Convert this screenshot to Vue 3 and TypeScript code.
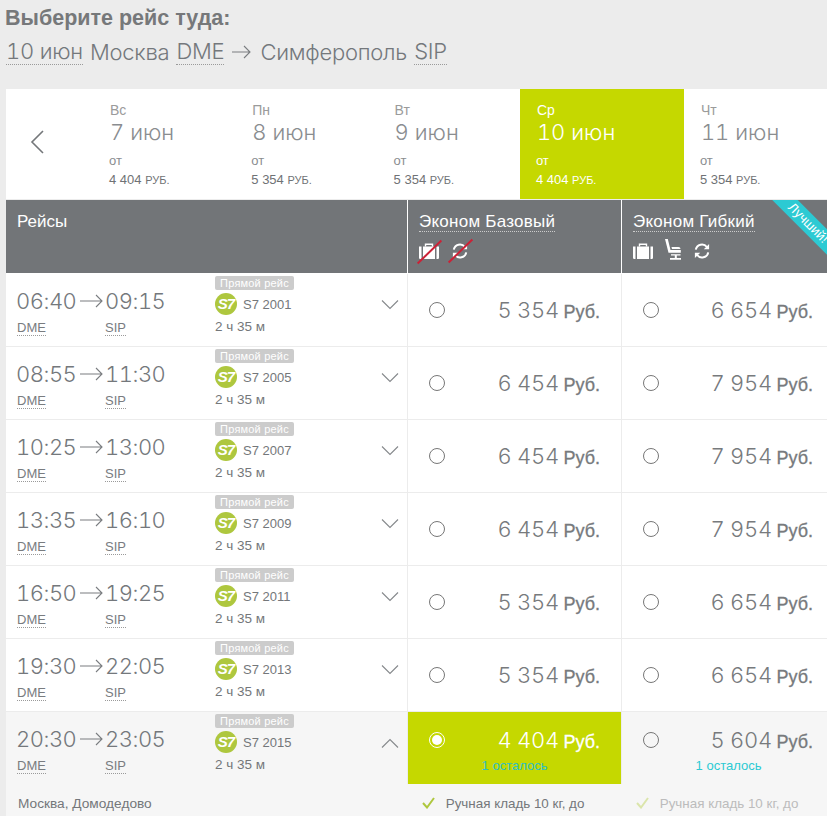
<script setup lang="ts">
interface Day { wd: string; date: string; price: string; active?: boolean }
interface Flight { dep: string; arr: string; no: string; a: string; b: string; open?: boolean }
const days: Day[] = [
  { wd: 'Вс', date: '7 июн', price: '4 404' },
  { wd: 'Пн', date: '8 июн', price: '5 354' },
  { wd: 'Вт', date: '9 июн', price: '5 354' },
  { wd: 'Ср', date: '10 июн', price: '4 404', active: true },
  { wd: 'Чт', date: '11 июн', price: '5 354' },
]
const flights: Flight[] = [
  { dep: '06:40', arr: '09:15', no: 'S7 2001', a: '5 354', b: '6 654' },
  { dep: '08:55', arr: '11:30', no: 'S7 2005', a: '6 454', b: '7 954' },
  { dep: '10:25', arr: '13:00', no: 'S7 2007', a: '6 454', b: '7 954' },
  { dep: '13:35', arr: '16:10', no: 'S7 2009', a: '6 454', b: '7 954' },
  { dep: '16:50', arr: '19:25', no: 'S7 2011', a: '5 354', b: '6 654' },
  { dep: '19:30', arr: '22:05', no: 'S7 2013', a: '5 354', b: '6 654' },
  { dep: '20:30', arr: '23:05', no: 'S7 2015', a: '4 404', b: '5 604', open: true },
]
</script>

<template>
  <div class="page">
    <h1 class="title">Выберите рейс туда:</h1>
    <div class="route">
      <span class="dot">10 июн</span> Москва <span class="dot">DME</span>
      <svg class="route-arrow" width="20" height="14" viewBox="0 0 20 14"><path d="M0 7H18M12 1l6 6-6 6" fill="none" stroke="#7a7d80" stroke-width="1.1"/></svg>
      Симферополь <span class="dot">SIP</span>
    </div>

    <div class="board">
      <div class="days">
        <div class="prev">
          <svg width="16" height="24" viewBox="0 0 16 24"><path d="M14 1L3 12l11 11" fill="none" stroke="#74777a" stroke-width="1.6"/></svg>
        </div>
        <div v-for="d in days" :key="d.date" class="day" :class="{ active: d.active }">
          <div class="wd">{{ d.wd }}</div>
          <div class="date">{{ d.date }}</div>
          <div class="from">от</div>
          <div class="dprice">{{ d.price }} <span>РУБ.</span></div>
        </div>
      </div>

      <div class="head">
        <div class="hcol hflights">Рейсы</div>
        <div class="hcol hfare">
          <span class="fname">Эконом Базовый</span>
          <div class="hicons">
            <span class="struck">
              <svg width="20" height="16" viewBox="0 0 20 16"><path d="M0 3.500h2.500V16H1.200A1.200 1.200 0 0 1 0 14.800zM4 3.500h12V16H4zM17.500 3.500H20v11.300a1.200 1.200 0 0 1-1.200 1.200h-1.300z" fill="#fff"/><path d="M6.500 3.500V1.200h7v2.300" fill="none" stroke="#fff" stroke-width="1.400"/></svg>
              <i class="slash"></i>
            </span>
            <span class="struck refresh">
              <svg width="16" height="16" viewBox="0 0 18 18"><path d="M2 7.500A7 7 0 0 1 14.500 4.500M16 10.500A7 7 0 0 1 3.500 13.500" fill="none" stroke="#fff" stroke-width="2.200"/><path d="M17 1v6h-6zM1 17v-6h6z" fill="#fff"/></svg>
              <i class="slash"></i>
            </span>
          </div>
        </div>
        <div class="hcol hfare last">
          <span class="fname">Эконом Гибкий</span>
          <div class="hicons">
            <span class="struck">
              <svg width="20" height="16" viewBox="0 0 20 16"><path d="M0 3.500h2.500V16H1.200A1.200 1.200 0 0 1 0 14.800zM4 3.500h12V16H4zM17.500 3.500H20v11.300a1.200 1.200 0 0 1-1.200 1.200h-1.300z" fill="#fff"/><path d="M6.500 3.500V1.200h7v2.300" fill="none" stroke="#fff" stroke-width="1.400"/></svg>
            </span>
            <span class="struck seat">
              <svg width="16" height="21" viewBox="0 0 16 21"><path d="M0 0h2.800l2.700 11h10.300v2.800H3.500z" fill="#fff"/><path d="M6.500 8h7a2 2 0 0 1 2 2H7zM6 15.200h9.500v1.400H6zM9.800 16.500h2V19h-2zM5 19h11v1.800H5z" fill="#fff"/></svg>
            </span>
            <span class="struck refresh">
              <svg width="16" height="16" viewBox="0 0 18 18"><path d="M2 7.500A7 7 0 0 1 14.500 4.500M16 10.500A7 7 0 0 1 3.500 13.500" fill="none" stroke="#fff" stroke-width="2.200"/><path d="M17 1v6h-6zM1 17v-6h6z" fill="#fff"/></svg>
            </span>
          </div>
          <div class="ribbon">Лучший!</div>
        </div>
      </div>

      <div v-for="f in flights" :key="f.no" class="row" :class="{ open: f.open }">
        <div class="info">
          <div class="times">
            <div class="leg"><div class="time">{{ f.dep }}</div><span class="dot ap">DME</span></div>
            <svg class="tarrow" width="23" height="14" viewBox="0 0 23 14"><path d="M0 7H22M16 1l6 6-6 6" fill="none" stroke="#7a7d80" stroke-width="1.100"/></svg>
            <div class="leg"><div class="time">{{ f.arr }}</div><span class="dot ap">SIP</span></div>
          </div>
          <div class="meta">
            <div class="badge">Прямой рейс</div>
            <div class="carrier"><span class="logo">S7</span>{{ f.no }}</div>
            <div class="dur">2 ч 35 м</div>
          </div>
          <svg class="chev" width="18" height="10" viewBox="0 0 18 10">
            <path :d="f.open ? 'M1 9.500L9 1.500l8 8' : 'M1 .5l8 8 8-8'" fill="none" stroke="#85888b" stroke-width="1.100"/>
          </svg>
        </div>
        <div class="fare" :class="{ sel: f.open }">
          <div class="fline">
            <span class="radio" :class="{ on: f.open }"></span>
            <span class="amount">{{ f.a }} <b>Руб.</b></span>
          </div>
          <div v-if="f.open" class="left">1 осталось</div>
        </div>
        <div class="fare last">
          <div class="fline">
            <span class="radio"></span>
            <span class="amount">{{ f.b }} <b>Руб.</b></span>
          </div>
          <div v-if="f.open" class="left">1 осталось</div>
        </div>
      </div>

      <div class="details">
        <div class="dinfo">Москва, Домодедово</div>
        <div class="dfare">
          <svg class="tick" width="13" height="12" viewBox="0 0 13 12"><path d="M1 6l4 4.500L12 1" fill="none" stroke="#aec73e" stroke-width="2"/></svg>
          Ручная кладь 10 кг, до
        </div>
        <div class="dfare faded">
          <svg class="tick" width="13" height="12" viewBox="0 0 13 12"><path d="M1 6l4 4.500L12 1" fill="none" stroke="#dbe5ab" stroke-width="2"/></svg>
          Ручная кладь 10 кг, до
        </div>
      </div>
    </div>
  </div>
</template>

<style>
html, body { margin: 0; height: 816px; overflow: hidden; background: #ececec; }
</style>

<style scoped>
.page {
  width: 827px; height: 816px; overflow: hidden; box-sizing: border-box; padding: 6px 0 0 6px;
  background: #ececec; color: #777a7d; font-family: "Liberation Sans", Arial, sans-serif;
}
.title { margin: 0 0 0 -1px; font-size: 21.500px; line-height: 24px; font-weight: 700; color: #76787a; }
.route {
  display: flex; align-items: center; gap: 7px; height: 28px; margin-top: 8px; width: 600px;
  font-family: Inter, sans-serif; font-weight: 300; font-size: 22px; letter-spacing: -.25px; color: #74787c; font-variant-numeric: tabular-nums;
}
.route .dot { line-height: 25px; }
.route-arrow { margin: 0 1px; }
.dot { border-bottom: 1px dotted #9a9a9a; }
.board { width: 900px; margin-top: 23px; }
.days { display: flex; height: 110px; background: #fff; width: 900px; }
.prev { width: 87px; display: flex; align-items: center; padding: 0 0 4px 23px; box-sizing: border-box; }
.day { width: 142.300px; box-sizing: border-box; padding: 14px 0 0 17px; color: #8a8d90; }
.day.active { width: 164px; background: #c5d800; color: #fff; }
.wd { font-size: 14px; line-height: 15px; color: #9b9b9b; }
.date { font-family: Inter, sans-serif; font-weight: 300; font-size: 22px; line-height: 24px; font-variant-numeric: tabular-nums; margin-top: 2px; }
.from { font-size: 13px; line-height: 14px; margin-top: 10px; color: #8a8d90; margin-left: -1px; }
.dprice { font-size: 13px; line-height: 14px; margin-top: 5px; color: #6f7275; margin-left: -1px; }
.dprice span { font-size: 11px; }
.active .wd, .active .from, .active .dprice { color: #fff; }

.head { display: flex; height: 74px; width: 900px; margin-top: 1px; background: #fff; }
.hcol { background: #727578; color: #fff; height: 73px; box-sizing: border-box; }
.hflights { width: 401px; padding: 13px 0 0 11px; font-size: 17px; line-height: 18px; }
.hfare { width: 213px; margin-left: 1px; padding: 12px 0 0 11px; font-size: 17px; position: relative; overflow: hidden; }
.hfare.last { width: 205px; margin-left: 1px; }
.fname { border-bottom: 1px dotted #ccc; line-height: 18px; display: inline-block; letter-spacing: .25px; }
.hicons { display: flex; align-items: center; gap: 13px; height: 24px; margin-top: 7px; }
.struck { position: relative; display: block; width: 20px; height: 16px; }
.struck svg { display: block; }
.struck.refresh { width: 16px; height: 16px; }
.struck.seat { width: 16px; height: 21px; margin: -4px 0 0 -1px; }
.slash { position: absolute; left: -6.500px; top: 7.500px; width: 33px; height: 2px; background: #cc2136; transform: rotate(-44deg); }
.refresh .slash { left: -8.500px; top: 7px; }
.ribbon {
  position: absolute; top: 14px; left: 141px; width: 90px; height: 18px; line-height: 18px; text-align: center;
  background: #2ccad3; color: #fff; font-size: 13px; transform: rotate(45deg);
}

.row { display: flex; height: 73px; width: 900px; background: #fff; border-bottom: 1px solid #ececec; box-sizing: border-box; }
.row.open { background: #f6f6f6; height: 72px; border-bottom: 0; }
.info { width: 401px; height: 100%; display: flex; position: relative; box-sizing: border-box; padding-left: 11px; }
.times { display: flex; width: 198px; padding-top: 14px; }
.leg { width: 63px; }
.leg:last-child { margin-left: 3px; }
.time { font-family: Inter, sans-serif; font-weight: 300; font-size: 22px; line-height: 26px; letter-spacing: -.5px; white-space: nowrap; color: #74787c; margin-left: -1px; }
.time { font-variant-numeric: tabular-nums; }
.ap { font-size: 13px; line-height: 15px; display: inline-block; margin: 6px 0 0 -1px; color: #797c7f; }
.leg:first-child .ap { margin-left: 0; }
.tarrow { margin-top: 6px; flex: none; }
.meta { padding-top: 2px; }
.badge { width: 79px; height: 14px; border-radius: 2px; background: #ccc; color: #fff; font-size: 11px; line-height: 14px; text-align: center; letter-spacing: .2px; }
.carrier { display: flex; align-items: center; height: 22px; margin-top: 3px; font-size: 13px; color: #74777a; }
.logo {
  width: 22px; height: 22px; border-radius: 50%; background: #aec73e; color: #fff; margin-right: 6px;
  font: italic 700 15px/22px "Liberation Sans", sans-serif; text-align: center; letter-spacing: -.8px;
}
.dur { font-size: 13.500px; line-height: 16px; margin-top: 4px; color: #74777a; }
.chev { position: absolute; left: 375px; top: 26px; }

.fare { width: 214px; height: 100%; box-sizing: border-box; border-left: 1px solid #ececec; padding: 0 21px 0 20px; }
.fare.last { padding-right: 22px; }
.fare.sel { background: #c5d800; color: #fff; border-left-color: #ececec; }
.fline { display: flex; align-items: center; justify-content: space-between; height: 47px; margin-top: 12px; }
.open .fline { height: 49px; margin-top: 3px; }
.radio { width: 14px; height: 14px; border: 1px solid #777; border-radius: 50%; flex: none; margin-left: 1px; }
.radio.on { border: 1px solid #fff; position: relative; }
.radio.on::after { content: ""; position: absolute; inset: 2px; background: #fff; border-radius: 50%; }
.amount { font-family: Inter, sans-serif; font-weight: 300; font-size: 22px; letter-spacing: -.3px; white-space: nowrap; text-align: right; font-variant-numeric: tabular-nums; }
.amount b { font-family: "Liberation Sans", sans-serif; font-weight: 400; font-size: 18px; letter-spacing: 0; margin-left: -1px; -webkit-text-stroke: .3px currentColor; }
.left { text-align: center; font-size: 13px; line-height: 15px; color: #2ccad3; margin: -6px -22px 0 -20px; }
.fare.sel .left { color: #2fc0c4; margin-right: -21px; }

.details { display: flex; background: #f6f6f6; height: 40px; width: 900px; }
.dinfo { width: 401px; box-sizing: border-box; padding: 12px 0 0 12px; font-size: 13.700px; line-height: 16px; color: #74777a; }
.dfare { width: 214px; box-sizing: border-box; padding: 12px 0 0 15px; font-size: 13.400px; line-height: 16px; color: #74777a; white-space: nowrap; position: relative; }
.dfare.faded { color: #bcbcbc; }
.tick { display: inline-block; margin-right: 7px; vertical-align: -1px; }
</style>
